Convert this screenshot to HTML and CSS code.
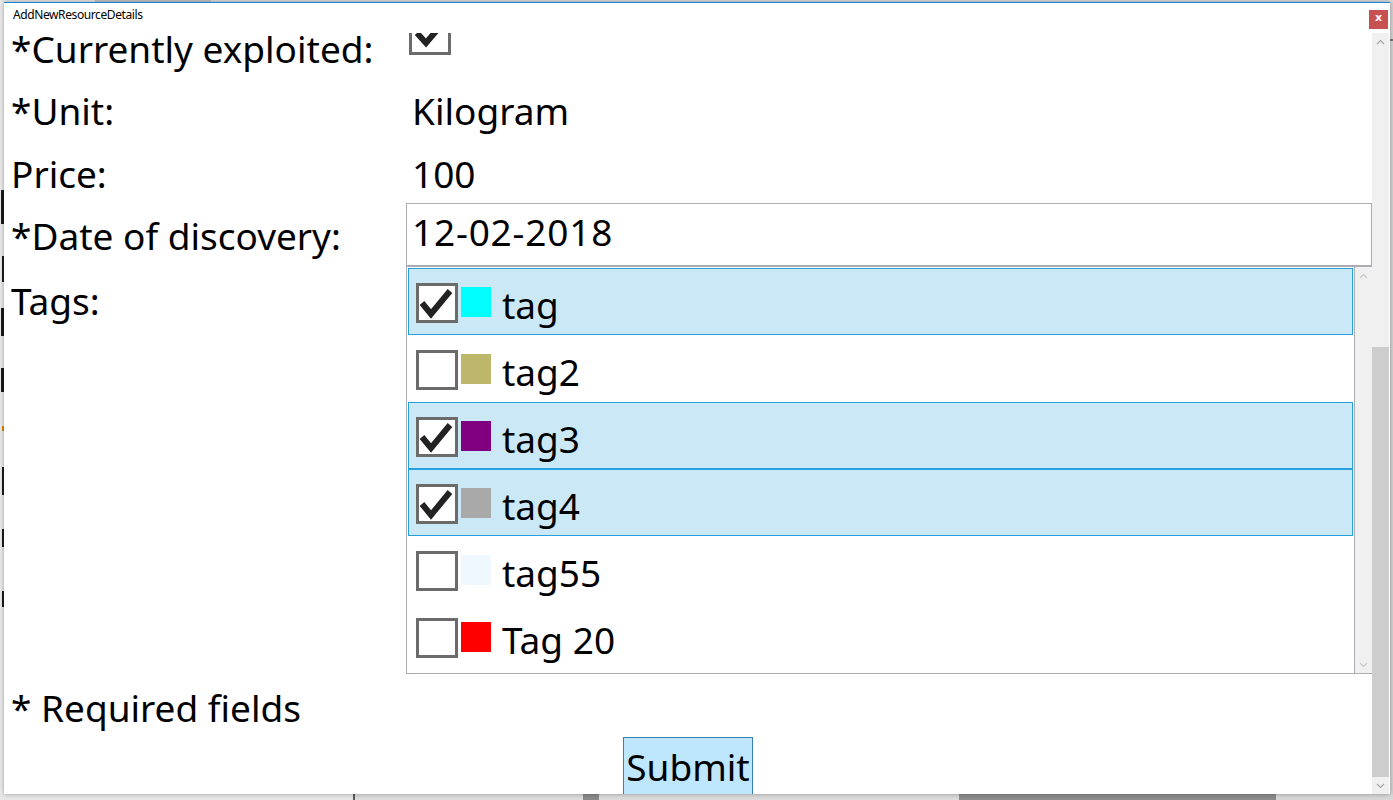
FILE: index.html
```html
<!DOCTYPE html>
<html lang="en">
<head>
<meta charset="utf-8">
<title>AddNewResourceDetails</title>
<link rel="stylesheet" href="styles.css">
</head>
<body>
<div class="topstrip"><span class="ts-a"></span><span class="ts-b"></span><span class="ts-c"></span></div>
<div class="desktop">
  <div class="bg-left">
    <span class="frag f1"></span>
    <span class="frag f2"></span>
    <span class="frag f3"></span>
    <span class="frag f4"></span>
    <span class="frag f5 orange"></span>
    <span class="frag f6"></span>
    <span class="frag f7"></span>
    <span class="frag f8"></span>
  </div>
  <div class="window">
    <div class="titlebar">
      <span class="title">AddNewResourceDetails</span>
      <div class="close">x</div>
    </div>
    <div class="client">
      <div class="viewport">
        <div class="form">
          <div class="grid">
            <div class="label r1">*Currently exploited:</div>
            <div class="value r1v">
              <div class="clipbox">
                <div class="check big">
                  <svg viewBox="0 0 36 36" width="36" height="36"><polyline points="5,17 14,27 31,7" fill="none" stroke="#222" stroke-width="6"/></svg>
                </div>
              </div>
            </div>

            <div class="label r2">*Unit:</div>
            <div class="value text r2">Kilogram</div>

            <div class="label r3">Price:</div>
            <div class="value text r3">100</div>

            <div class="label r4">*Date of discovery:</div>
            <div class="value"><div class="textbox">12-02-2018</div></div>

            <div class="label r5">Tags:</div>
            <div class="value">
              <div class="listbox">
                <div class="items">
                  <div class="item selected">
                    <div class="check"><svg viewBox="0 0 36 34" width="36" height="34"><polyline points="3,17 12,28 31,5" fill="none" stroke="#222" stroke-width="6"/></svg></div>
                    <span class="swatch" style="background:#00ffff"></span>
                    <span class="tagname">tag</span>
                  </div>
                  <div class="item">
                    <div class="check"></div>
                    <span class="swatch" style="background:#bdb76b"></span>
                    <span class="tagname">tag2</span>
                  </div>
                  <div class="item selected">
                    <div class="check"><svg viewBox="0 0 36 34" width="36" height="34"><polyline points="3,17 12,28 31,5" fill="none" stroke="#222" stroke-width="6"/></svg></div>
                    <span class="swatch" style="background:#800080"></span>
                    <span class="tagname">tag3</span>
                  </div>
                  <div class="item selected">
                    <div class="check"><svg viewBox="0 0 36 34" width="36" height="34"><polyline points="3,17 12,28 31,5" fill="none" stroke="#222" stroke-width="6"/></svg></div>
                    <span class="swatch" style="background:#a9a9a9"></span>
                    <span class="tagname">tag4</span>
                  </div>
                  <div class="item">
                    <div class="check"></div>
                    <span class="swatch" style="background:#f0f8ff"></span>
                    <span class="tagname">tag55</span>
                  </div>
                  <div class="item">
                    <div class="check"></div>
                    <span class="swatch" style="background:#ff0000"></span>
                    <span class="tagname">Tag 20</span>
                  </div>
                </div>
                <div class="lscroll">
                  <svg class="chev" viewBox="0 0 9 6" width="9" height="6"><polyline points="1,5 4.5,1.5 8,5" fill="none" stroke="#c8c8c8" stroke-width="1.2"/></svg>
                  <svg class="chev" viewBox="0 0 9 6" width="9" height="6"><polyline points="1,1 4.5,4.5 8,1" fill="none" stroke="#c8c8c8" stroke-width="1.2"/></svg>
                </div>
              </div>
            </div>

            <div class="label r6 span2">* Required fields</div>
          </div>
          <div class="submit-row">
            <button class="submit" type="button">Submit</button>
          </div>
        </div>
      </div>
      <div class="vscroll">
        <div class="sb-btn"><svg viewBox="0 0 9 6" width="9" height="6"><polyline points="1,5 4.5,1.5 8,5" fill="none" stroke="#a6a6a6" stroke-width="1.2"/></svg></div>
        <div class="sb-track"></div>
        <div class="sb-thumb"></div>
        <div class="sb-btn"><svg viewBox="0 0 9 6" width="9" height="6"><polyline points="1,1 4.5,4.5 8,1" fill="none" stroke="#a6a6a6" stroke-width="1.2"/></svg></div>
      </div>
    </div>
  </div>
  <div class="bg-right"><span class="br-line"></span></div>
</div>
<div class="bottomstrip">
  <span class="bs-a"></span><span class="bs-line"></span><span class="bs-b"></span><span class="bs-wedge"></span><span class="bs-c"></span><span class="bs-dark"></span><span class="bs-d"></span>
</div>
</body>
</html>
```

FILE: styles.css
```css
* { box-sizing: border-box; }

html, body {
  margin: 0;
  padding: 0;
}

body {
  width: 1393px;
  height: 800px;
  overflow: hidden;
  background: #e4e4e4;
  font-family: "Noto Sans", "Open Sans", sans-serif;
  color: #000;
  display: flex;
  flex-direction: column;
}

/* background application strips */
.topstrip {
  height: 2px;
  display: flex;
  background: #dadada;
}
.ts-a { width: 95px; background: #e6e6e6; }
.ts-b { width: 116px; background: #c4c4c4; }
.ts-c { flex: 1; background: #dcdcdc; }

.desktop {
  display: flex;
  height: 792px;
}

.bg-left {
  width: 4px;
  background: #ececec;
  display: flex;
  flex-direction: column;
  align-items: flex-end;
  padding-top: 180px;
}
.frag {
  display: block;
  width: 3px;
  background: #1a1a1a;
}
.f1 { height: 34px; margin-top: 8px; }
.f2 { height: 26px; margin-top: 32px; width: 2px; }
.f3 { height: 28px; margin-top: 26px; }
.f4 { height: 24px; margin-top: 32px; }
.f5 { height: 5px; margin-top: 34px; width: 2px; }
.f6 { height: 28px; margin-top: 36px; width: 2px; }
.f7 { height: 18px; margin-top: 34px; width: 2px; }
.f8 { height: 16px; margin-top: 44px; width: 2px; }
.frag.orange { background: #e08a00; }

.bg-right {
  width: 3px;
  background: #d6d6d6;
  display: flex;
  flex-direction: column;
  padding-top: 37px;
}
.br-line { height: 2px; background: #777; }

.window {
  width: 1386px;
  height: 792px;
  background: #fff;
  display: flex;
  flex-direction: column;
  box-shadow: 0 0 5px rgba(0, 0, 0, 0.35);
  position: relative;
  z-index: 1;
}

.titlebar {
  height: 31px;
  border-top: 1px solid #1883d7;
  display: flex;
  align-items: flex-start;
  flex: 0 0 auto;
}
.title {
  font-size: 12px;
  line-height: 14px;
  padding-left: 9px;
  padding-top: 5px;
  color: #000;
  letter-spacing: -0.4px;
}
.close {
  margin-left: auto;
  margin-top: 7px;
  margin-right: 2px;
  width: 19px;
  height: 19px;
  background: #c75050;
  color: #fff;
  font-family: "DejaVu Sans", sans-serif;
  font-weight: bold;
  font-size: 11px;
  line-height: 16px;
  text-align: center;
}

.client {
  flex: 1;
  display: flex;
  min-height: 0;
}

.viewport {
  flex: 1;
}

.grid {
  display: grid;
  grid-template-columns: 402px 966px;
  grid-template-rows: 47px 63px 60px 63px 408px 63px;
  font-size: 37px;
  line-height: 44px;
}

.label {
  padding-left: 7px;
  white-space: nowrap;
}
.r1 { padding-top: 1px; line-height: 30px; }
.r2 { padding-top: 9px; }
.r3 { padding-top: 9px; }
.r4 { padding-top: 11px; }
.r5 { padding-top: 13px; }
.r6 { padding-top: 12px; }
.span2 { grid-column: 1 / span 2; }

.value.text {
  padding-left: 6px;
}
.r1v {
  padding-left: 3px;
}
.clipbox {
  height: 22px;
  width: 42px;
  overflow: hidden;
  display: flex;
  flex-direction: column;
  justify-content: flex-end;
}

.check {
  width: 42px;
  height: 40px;
  border: 3px solid #6b6b6b;
  background: #fff;
  display: flex;
  align-items: center;
  justify-content: center;
  flex: 0 0 auto;
}
.check.big {
  height: 42px;
}

.textbox {
  height: 63px;
  border: 1px solid #abadb3;
  padding-left: 5px;
  padding-top: 6px;
  letter-spacing: 0.8px;
}

.listbox {
  height: 408px;
  display: flex;
  border: 1px solid #abadb3;
  border-right: none;
}
.items {
  flex: 1;
  border-right: 1px solid #abadb3;
  padding-top: 1px;
}
.item {
  height: 67px;
  margin: 0 1px 0 1px;
  border: 1px solid transparent;
  padding: 14px 0 0 7px;
  display: flex;
  align-items: flex-start;
}
.item.selected {
  background: #cbe8f6;
  border-color: #26a0da;
}
.swatch {
  width: 30px;
  height: 30px;
  margin-left: 3px;
  margin-top: 4px;
  flex: 0 0 auto;
}
.tagname {
  margin-left: 11px;
}

.lscroll {
  width: 17px;
  background: #f0f0f0;
  display: flex;
  flex-direction: column;
  justify-content: space-between;
  align-items: center;
  padding: 6px 0 5px;
}

.submit-row {
  display: flex;
  justify-content: center;
}
.submit {
  font-family: "Noto Sans", "Open Sans", sans-serif;
  font-size: 37px;
  line-height: 50px;
  height: 57px;
  padding: 4px 2px 0;
  margin: 0;
  background: #bee6fd;
  border: 1px solid #3c7fb1;
  border-bottom: none;
  color: #000;
  display: flex;
  align-items: flex-start;
}

.vscroll {
  width: 17px;
  margin-right: 1px;
  background: #f0f0f0;
  display: flex;
  flex-direction: column;
}
.sb-btn {
  height: 17px;
  display: flex;
  align-items: center;
  justify-content: center;
  flex: 0 0 auto;
}
.sb-track { height: 297px; }
.sb-thumb { flex: 1; background: #cdcdcd; }

.bottomstrip {
  height: 6px;
  display: flex;
  background: #e2e2e2;
}
.bs-a { width: 353px; background: #e8e8e8; }
.bs-line { width: 2px; background: #5a5a5a; }
.bs-b { width: 228px; background: #dedede; }
.bs-wedge { width: 16px; background: #8a8a8a; }
.bs-c { width: 360px; background: #dcdcdc; }
.bs-dark { width: 317px; background: #8c8c8c; }
.bs-d { flex: 1; background: #d8d8d8; }
```
